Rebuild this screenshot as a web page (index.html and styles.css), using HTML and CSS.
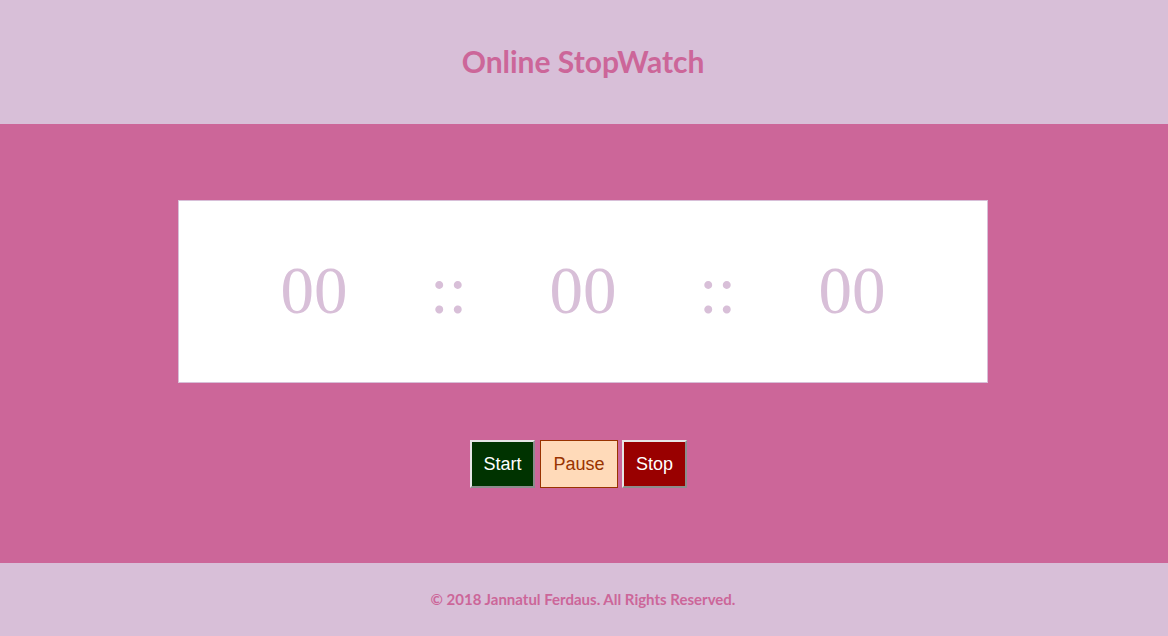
FILE: index.html
```html
<!DOCTYPE html>
<html>
<head>
<meta charset="utf-8">
<title>Online StopWatch</title>
<link rel="stylesheet" href="styles.css">
</head>
<body>
<header class="top">
  <h1 class="title">Online StopWatch</h1>
</header>
<main class="main">
  <div class="clock">
    <span class="seg">00</span>
    <span class="seg sep">::</span>
    <span class="seg">00</span>
    <span class="seg sep">::</span>
    <span class="seg">00</span>
  </div>
  <div class="controls">
    <button class="btn start">Start</button>
    <button class="btn pause">Pause</button>
    <button class="btn stop">Stop</button>
  </div>
</main>
<footer class="bottom">
  <p class="copy">© 2018 Jannatul Ferdaus. All Rights Reserved.</p>
</footer>
</body>
</html>
```
FILE: styles.css
```css
html, body {
  margin: 0;
  padding: 0;
}
body {
  width: 1168px;
  height: 636px;
  display: flex;
  flex-direction: column;
  background: #cc6699;
}
.top {
  height: 124px;
  box-sizing: border-box;
  padding-right: 2px;
  background: #d8bfd8;
  display: flex;
  align-items: center;
  justify-content: center;
}
.title {
  margin: 0;
  font-family: "Lato", "Open Sans", sans-serif;
  font-weight: 700;
  font-size: 30px;
  color: #cc6699;
  padding-bottom: 2px;
}
.main {
  height: 439px;
  box-sizing: border-box;
  padding-top: 76px;
  padding-right: 2px;
  background: #cc6699;
  display: flex;
  flex-direction: column;
  align-items: center;
}
.clock {
  width: 810px;
  height: 183px;
  box-sizing: border-box;
  background: #ffffff;
  border: 1px solid #d8bfd8;
  display: flex;
  align-items: center;
  justify-content: center;
  font-family: "Liberation Serif", "Times New Roman", serif;
  font-size: 67px;
  color: #d8bfd8;
}
.seg {
  width: 134.5px;
  text-align: center;
  line-height: 1;
  margin-top: -3px;
}
.controls {
  margin-top: 57px;
  margin-right: 9px;
  display: flex;
  gap: 4px;
}
.btn {
  font-family: "Liberation Sans", Arial, sans-serif;
  font-size: 18px;
  padding: 12px 11px;
  height: 48px;
  box-sizing: border-box;
  border: 2px solid;
  border-top-color: #e6e6e6;
  border-left-color: #e6e6e6;
  border-right-color: #8c8c8c;
  border-bottom-color: #8c8c8c;
  line-height: 20px;
  margin: 0;
}
.start {
  background: #003300;
  color: #ffffff;
  width: 65px;
}
.pause {
  background: #ffdab9;
  color: #993300;
  border: 1px solid #993300;
  width: 78px;
  margin-left: 1px;
}
.stop {
  background: #990000;
  color: #ffffff;
  width: 65px;
}
.bottom {
  height: 73px;
  box-sizing: border-box;
  padding-right: 2px;
  background: #d8bfd8;
  display: flex;
  align-items: center;
  justify-content: center;
}
.copy {
  margin: 0;
  font-family: "Lato", "Open Sans", sans-serif;
  font-weight: 700;
  font-size: 15px;
  color: #cc6699;
  padding-bottom: 2px;
}
```
